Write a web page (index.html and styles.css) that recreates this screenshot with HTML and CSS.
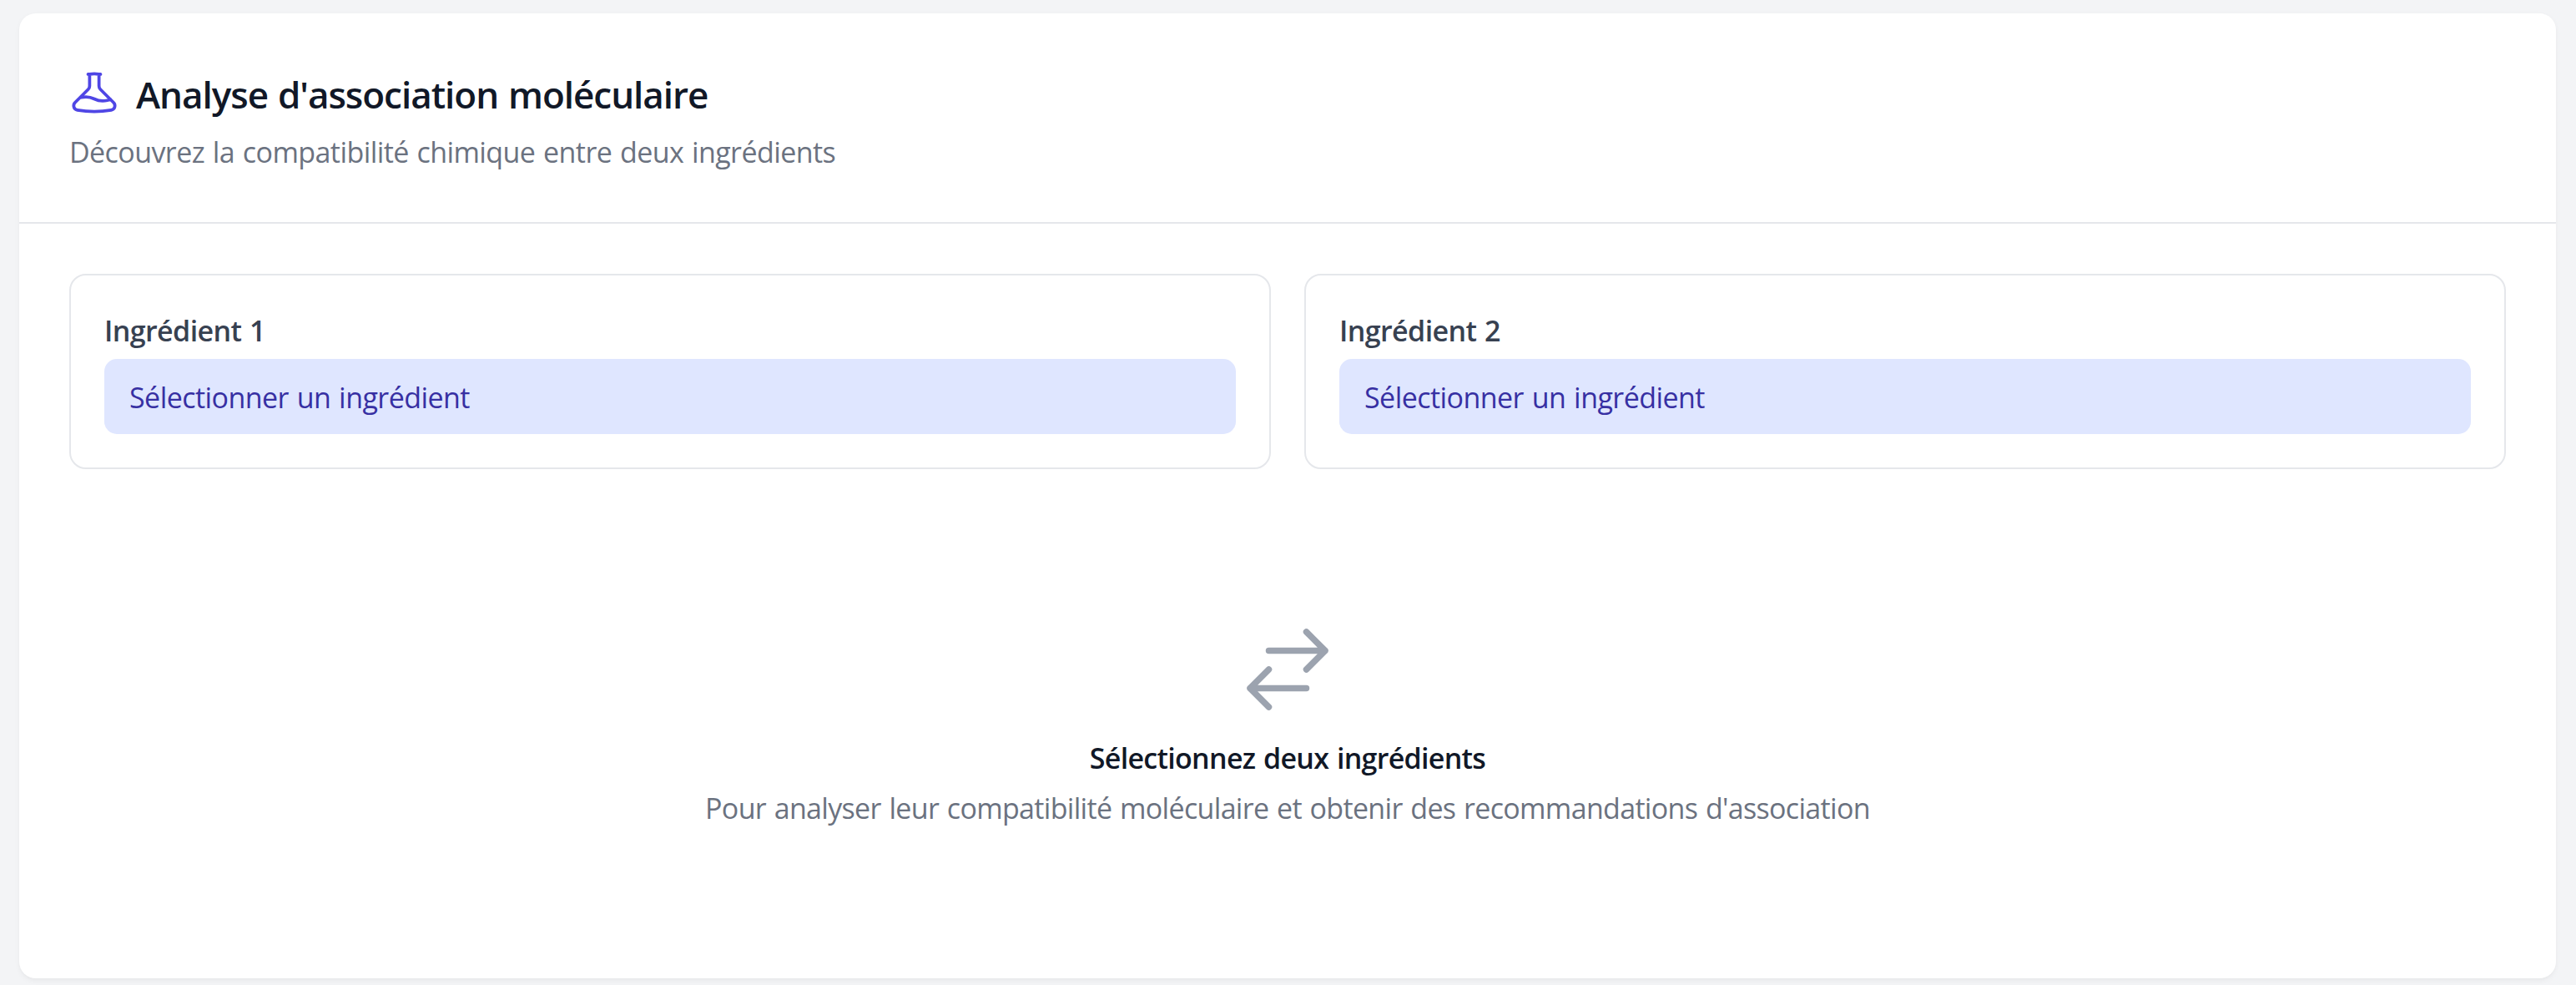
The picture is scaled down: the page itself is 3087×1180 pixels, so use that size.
FILE: index.html
```html
<!DOCTYPE html>
<html lang="fr">
<head>
  <meta charset="utf-8">
  <title>Analyse d'association moléculaire</title>
  <link rel="stylesheet" href="styles.css">
</head>
<body>
  <main class="card">
    <header class="card-header">
      <div class="heading">
        <svg class="icon-beaker" viewBox="0 0 24 24" aria-hidden="true"><path d="M9.75 3.104v5.714a2.25 2.25 0 01-.659 1.591L5 14.5M9.75 3.104c-.251.023-.501.05-.75.082m.75-.082a24.301 24.301 0 014.5 0m0 0v5.714c0 .597.237 1.17.659 1.591L19.8 15.3M14.25 3.104c.251.023.501.05.75.082M19.8 15.3l-1.57.393A9.065 9.065 0 0112 15a9.065 9.065 0 00-6.23-.693L5 14.5m14.8.8l1.402 1.402c1.232 1.232.65 3.318-1.067 3.611A48.309 48.309 0 0112 21c-2.773 0-5.491-.235-8.135-.687-1.718-.293-2.3-2.379-1.067-3.61L5 14.5"/></svg>
        <h1 class="title">Analyse d'association moléculaire</h1>
      </div>
      <p class="subtitle">Découvrez la compatibilité chimique entre deux ingrédients</p>
    </header>
    <div class="card-body">
      <div class="ingredients">
        <section class="ingredient">
          <h2 class="label">Ingrédient 1</h2>
          <button class="picker" type="button"><span class="picker-text">Sélectionner un ingrédient</span></button>
        </section>
        <section class="ingredient">
          <h2 class="label">Ingrédient 2</h2>
          <button class="picker" type="button"><span class="picker-text">Sélectionner un ingrédient</span></button>
        </section>
      </div>
      <div class="empty">
        <svg class="icon-arrows" viewBox="0 0 24 24" aria-hidden="true"><path d="M7.5 21L3 16.5m0 0L7.5 12M3 16.5h13.5m0-13.5L21 7.5m0 0L16.5 12M21 7.5H7.5"/></svg>
        <h3 class="empty-title">Sélectionnez deux ingrédients</h3>
        <p class="empty-text">Pour analyser leur compatibilité moléculaire et obtenir des recommandations d'association</p>
      </div>
    </div>
  </main>
</body>
</html>
```
FILE: styles.css
```css
* {
  box-sizing: border-box;
  margin: 0;
}

body {
  min-height: 1180px;
  padding: 16px 24px 8px 23px;
  background: #f3f4f6;
  font-family: "Open Sans", "Noto Sans", sans-serif;
  font-size: 34px;
  word-spacing: 1.5px;
  overflow: hidden;
}

svg {
  display: block;
  flex: none;
  fill: none;
  stroke-width: 1.5;
  stroke-linecap: round;
  stroke-linejoin: round;
}

.card {
  height: 1156px;
  border-radius: 20px;
  background: #fff;
  box-shadow: 0 2.5px 7.5px rgba(0, 0, 0, 0.04), 0 2.5px 5px -2.5px rgba(0, 0, 0, 0.04);
}

.card-header {
  padding: 60px;
  border-bottom: 2px solid #e5e7eb;
}

.heading {
  display: flex;
  align-items: center;
  gap: 20px;
}

.icon-beaker {
  width: 60px;
  height: 60px;
  stroke: #4f46e5;
}

.title {
  padding-top: 4px;
  color: #111827;
  font-size: 44px;
  font-weight: 600;
  line-height: 66px;
  letter-spacing: -1.02px;
}

.subtitle,
.label,
.picker-text,
.empty-title,
.empty-text {
  padding-top: 2px;
  line-height: 48px;
}

.subtitle {
  margin-top: 10px;
  color: #6b7280;
  letter-spacing: -0.58px;
}

.card-body {
  padding: 60px;
}

.ingredients {
  display: grid;
  grid-template-columns: 1fr 1fr;
  gap: 40px;
}

.ingredient {
  padding: 40px;
  border: 2px solid #e5e7eb;
  border-radius: 20px;
}

.label {
  color: #374151;
  font-size: 34px;
  font-weight: 600;
  letter-spacing: -0.6px;
}

.picker {
  display: block;
  width: 100%;
  margin-top: 10px;
  padding: 20px 30px;
  border: 0;
  border-radius: 15px;
  background: #dfe6ff;
  color: #3730a3;
  font: inherit;
  text-align: left;
}

.picker-text {
  display: block;
  letter-spacing: -0.55px;
  word-spacing: 1.5px;
}

.empty {
  display: flex;
  flex-direction: column;
  align-items: center;
  padding: 180px 0 120px;
}

.icon-arrows {
  width: 120px;
  height: 120px;
  stroke: #9ca3af;
}

.empty-title {
  margin-top: 20px;
  color: #111827;
  font-size: 34px;
  font-weight: 600;
  letter-spacing: -0.7px;
}

.empty-text {
  margin-top: 10px;
  color: #6b7280;
  letter-spacing: -0.675px;
}
```
